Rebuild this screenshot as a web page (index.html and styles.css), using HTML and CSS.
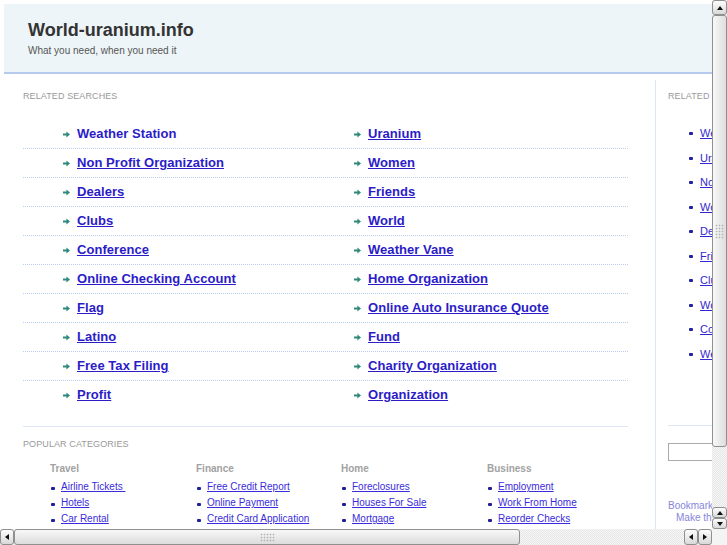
FILE: index.html
```html
<!DOCTYPE html>
<html lang="en">
<head>
<meta charset="utf-8">
<title>World-uranium.info</title>
<link rel="stylesheet" href="styles.css">
</head>
<body>
<div class="window">
  <div class="viewport">
    <div class="page">
      <header class="masthead">
        <h1 class="site-title">World-uranium.info</h1>
        <p class="tagline">What you need, when you need it</p>
      </header>
      <div class="columns">
        <main class="main">
          <h2 class="label">Related Searches</h2>
          <ul class="searches">
            <li class="search-row">
              <span class="search-cell"><svg class="arrow" viewBox="0 0 7 7"><path d="M0 2.4h3.4V0.4L7 3.5 3.4 6.6V4.6H0z"/></svg><a class="search-link plain" href="#">Weather Station</a></span>
              <span class="search-cell"><svg class="arrow" viewBox="0 0 7 7"><path d="M0 2.4h3.4V0.4L7 3.5 3.4 6.6V4.6H0z"/></svg><a class="search-link" href="#">Uranium</a></span>
            </li>
            <li class="search-row">
              <span class="search-cell"><svg class="arrow" viewBox="0 0 7 7"><path d="M0 2.4h3.4V0.4L7 3.5 3.4 6.6V4.6H0z"/></svg><a class="search-link" href="#">Non Profit Organization</a></span>
              <span class="search-cell"><svg class="arrow" viewBox="0 0 7 7"><path d="M0 2.4h3.4V0.4L7 3.5 3.4 6.6V4.6H0z"/></svg><a class="search-link" href="#">Women</a></span>
            </li>
            <li class="search-row">
              <span class="search-cell"><svg class="arrow" viewBox="0 0 7 7"><path d="M0 2.4h3.4V0.4L7 3.5 3.4 6.6V4.6H0z"/></svg><a class="search-link" href="#">Dealers</a></span>
              <span class="search-cell"><svg class="arrow" viewBox="0 0 7 7"><path d="M0 2.4h3.4V0.4L7 3.5 3.4 6.6V4.6H0z"/></svg><a class="search-link" href="#">Friends</a></span>
            </li>
            <li class="search-row">
              <span class="search-cell"><svg class="arrow" viewBox="0 0 7 7"><path d="M0 2.4h3.4V0.4L7 3.5 3.4 6.6V4.6H0z"/></svg><a class="search-link" href="#">Clubs</a></span>
              <span class="search-cell"><svg class="arrow" viewBox="0 0 7 7"><path d="M0 2.4h3.4V0.4L7 3.5 3.4 6.6V4.6H0z"/></svg><a class="search-link" href="#">World</a></span>
            </li>
            <li class="search-row">
              <span class="search-cell"><svg class="arrow" viewBox="0 0 7 7"><path d="M0 2.4h3.4V0.4L7 3.5 3.4 6.6V4.6H0z"/></svg><a class="search-link" href="#">Conference</a></span>
              <span class="search-cell"><svg class="arrow" viewBox="0 0 7 7"><path d="M0 2.4h3.4V0.4L7 3.5 3.4 6.6V4.6H0z"/></svg><a class="search-link" href="#">Weather Vane</a></span>
            </li>
            <li class="search-row">
              <span class="search-cell"><svg class="arrow" viewBox="0 0 7 7"><path d="M0 2.4h3.4V0.4L7 3.5 3.4 6.6V4.6H0z"/></svg><a class="search-link" href="#">Online Checking Account</a></span>
              <span class="search-cell"><svg class="arrow" viewBox="0 0 7 7"><path d="M0 2.4h3.4V0.4L7 3.5 3.4 6.6V4.6H0z"/></svg><a class="search-link" href="#">Home Organization</a></span>
            </li>
            <li class="search-row">
              <span class="search-cell"><svg class="arrow" viewBox="0 0 7 7"><path d="M0 2.4h3.4V0.4L7 3.5 3.4 6.6V4.6H0z"/></svg><a class="search-link" href="#">Flag</a></span>
              <span class="search-cell"><svg class="arrow" viewBox="0 0 7 7"><path d="M0 2.4h3.4V0.4L7 3.5 3.4 6.6V4.6H0z"/></svg><a class="search-link" href="#">Online Auto Insurance Quote</a></span>
            </li>
            <li class="search-row">
              <span class="search-cell"><svg class="arrow" viewBox="0 0 7 7"><path d="M0 2.4h3.4V0.4L7 3.5 3.4 6.6V4.6H0z"/></svg><a class="search-link" href="#">Latino</a></span>
              <span class="search-cell"><svg class="arrow" viewBox="0 0 7 7"><path d="M0 2.4h3.4V0.4L7 3.5 3.4 6.6V4.6H0z"/></svg><a class="search-link" href="#">Fund</a></span>
            </li>
            <li class="search-row">
              <span class="search-cell"><svg class="arrow" viewBox="0 0 7 7"><path d="M0 2.4h3.4V0.4L7 3.5 3.4 6.6V4.6H0z"/></svg><a class="search-link" href="#">Free Tax Filing</a></span>
              <span class="search-cell"><svg class="arrow" viewBox="0 0 7 7"><path d="M0 2.4h3.4V0.4L7 3.5 3.4 6.6V4.6H0z"/></svg><a class="search-link" href="#">Charity Organization</a></span>
            </li>
            <li class="search-row">
              <span class="search-cell"><svg class="arrow" viewBox="0 0 7 7"><path d="M0 2.4h3.4V0.4L7 3.5 3.4 6.6V4.6H0z"/></svg><a class="search-link" href="#">Profit</a></span>
              <span class="search-cell"><svg class="arrow" viewBox="0 0 7 7"><path d="M0 2.4h3.4V0.4L7 3.5 3.4 6.6V4.6H0z"/></svg><a class="search-link" href="#">Organization</a></span>
            </li>
          </ul>
          <section class="popular">
            <h2 class="label">Popular Categories</h2>
            <div class="categories">
              <div class="category">
                <h3 class="cat-title">Travel</h3>
                <ul class="cat-list">
                  <li><a href="#">Airline Tickets </a></li>
                  <li><a href="#">Hotels</a></li>
                  <li><a href="#">Car Rental</a></li>
                </ul>
              </div>
              <div class="category">
                <h3 class="cat-title">Finance</h3>
                <ul class="cat-list">
                  <li><a href="#">Free Credit Report</a></li>
                  <li><a href="#">Online Payment</a></li>
                  <li><a href="#">Credit Card Application</a></li>
                </ul>
              </div>
              <div class="category">
                <h3 class="cat-title">Home</h3>
                <ul class="cat-list">
                  <li><a href="#">Foreclosures</a></li>
                  <li><a href="#">Houses For Sale</a></li>
                  <li><a href="#">Mortgage</a></li>
                </ul>
              </div>
              <div class="category">
                <h3 class="cat-title">Business</h3>
                <ul class="cat-list">
                  <li><a href="#">Employment</a></li>
                  <li><a href="#">Work From Home</a></li>
                  <li><a href="#">Reorder Checks</a></li>
                </ul>
              </div>
            </div>
          </section>
        </main>
        <aside class="sidebar">
          <h2 class="label">Related Searches</h2>
          <ul class="side-list">
            <li><a href="#">Weather Station</a></li>
            <li><a href="#">Uranium</a></li>
            <li><a href="#">Non Profit Organization</a></li>
            <li><a href="#">Women</a></li>
            <li><a href="#">Dealers</a></li>
            <li><a href="#">Friends</a></li>
            <li><a href="#">Clubs</a></li>
            <li><a href="#">World</a></li>
            <li><a href="#">Conference</a></li>
            <li><a href="#">Weather Vane</a></li>
          </ul>
          <div class="side-search">
            <input class="search-input" type="text" aria-label="Search">
          </div>
          <p class="side-note">Bookmark this page</p>
          <p class="side-note indent">Make this your homepage</p>
        </aside>
      </div>
    </div>
  </div>
  <div class="vscroll">
    <div class="sb-btn"><span class="tri up"></span></div>
    <div class="sb-thumb v"><span class="grip v"></span></div>
    <div class="sb-track"></div>
    <div class="sb-btn small"><span class="tri up"></span></div>
    <div class="sb-btn small"><span class="tri down"></span></div>
  </div>
  <div class="hscroll">
    <div class="sb-btn"><span class="tri left"></span></div>
    <div class="sb-thumb h"><span class="grip h"></span></div>
    <div class="sb-track"></div>
    <div class="sb-btn"><span class="tri left"></span></div>
    <div class="sb-btn"><span class="tri right"></span></div>
  </div>
  <div class="corner"></div>
</div>
</body>
</html>
```

FILE: styles.css
```css
html, body {
  margin: 0;
  padding: 0;
  overflow: hidden;
  background: #fff;
}

.window {
  display: grid;
  grid-template-columns: 712px 15px;
  grid-template-rows: 529px 16px;
  width: 727px;
  height: 545px;
  font-family: "Liberation Sans", Arial, sans-serif;
}

.viewport {
  overflow: hidden;
  background: #fff;
}

.page {
  width: 940px;
  padding: 4px 0 0 4px;
}

/* header */
.masthead {
  height: 70px;
  box-sizing: border-box;
  padding: 15px 0 0 24px;
  background: #eef5f8;
  border-bottom: 2px solid #b6caee;
}

.site-title {
  margin: 0;
  font-size: 18px;
  line-height: 22px;
  font-weight: bold;
  color: #333;
}

.tagline {
  margin: 4px 0 0;
  font-size: 10px;
  line-height: 12px;
  color: #555;
}

/* columns */
.columns {
  display: flex;
  align-items: stretch;
  min-height: 560px;
}

.main {
  width: 651px;
  box-sizing: border-box;
  padding: 17px 27px 0 19px;
}

.label {
  margin: 0;
  font-size: 9px;
  line-height: 10px;
  font-weight: normal;
  letter-spacing: 0.1px;
  text-transform: uppercase;
  color: #999;
  white-space: nowrap;
}

.searches {
  list-style: none;
  margin: 19px 0 0;
  padding: 0;
}

.search-row {
  display: flex;
  height: 29px;
  box-sizing: border-box;
  padding: 0 0 1px 40px;
  background: repeating-linear-gradient(90deg, #b9cef0 0 1px, transparent 1px 2px) left bottom / 100% 1px no-repeat;
}

.search-row:last-child {
  background: none;
}

.search-cell {
  display: flex;
  align-items: center;
  gap: 7px;
  width: 291px;
  flex: none;
}

.arrow {
  width: 7px;
  height: 7px;
  fill: #2f8a7c;
  flex: none;
  margin-top: 1px;
}

.search-link {
  font-size: 13px;
  line-height: 28px;
  font-weight: bold;
  color: #2b1cc8;
  text-decoration: underline;
  white-space: nowrap;
  letter-spacing: 0.05px;
}

.search-link.plain {
  text-decoration: none;
}

.popular {
  margin-top: 16px;
  border-top: 1px solid #dde7f5;
  padding-top: 12px;
}

.categories {
  display: grid;
  grid-template-columns: 146px 145px 146px 146px;
  padding-left: 27px;
  margin-top: 14px;
}

.cat-title {
  margin: 0 0 4px;
  font-size: 10px;
  line-height: 12px;
  font-weight: bold;
  color: #a2a2a2;
}

.cat-list {
  list-style: none;
  margin: 0;
  padding: 0;
}

.cat-list li {
  display: flex;
  align-items: center;
  gap: 6px;
  height: 16px;
  padding-left: 1px;
}

.cat-list li::before {
  content: "";
  width: 4px;
  height: 3px;
  border-radius: 1px;
  background: #20209a;
  flex: none;
  margin-top: 2px;
}

.cat-list a {
  font-size: 10px;
  line-height: 16px;
  color: #3a2cdc;
  text-decoration: underline;
  white-space: pre;
}

/* sidebar */
.sidebar {
  width: 285px;
  box-sizing: border-box;
  margin-top: 6px;
  padding: 11px 0 0 12px;
  border-left: 1px solid #dde6f4;
}

.side-list {
  list-style: none;
  margin: 20px 0 0;
  padding: 0 0 0 21px;
}

.side-list li {
  display: flex;
  align-items: center;
  gap: 7px;
  height: 24.5px;
}

.side-list li::before {
  content: "";
  width: 4px;
  height: 3px;
  border-radius: 1px;
  background: #2020a0;
  flex: none;
  margin-top: 1px;
}

.side-list a {
  font-size: 11px;
  line-height: 14px;
  color: #3228d0;
  text-decoration: underline;
  white-space: nowrap;
}

.side-search {
  margin-top: 59px;
  border-top: 1px solid #dde7f5;
  padding-top: 17px;
}

.search-input {
  display: block;
  width: 150px;
  height: 18px;
  box-sizing: border-box;
  margin: 0;
  border: 1px solid #ababab;
  background: #fff;
  padding: 0;
}

.side-note {
  margin: 0;
  font-size: 10px;
  line-height: 12px;
  color: #8686dc;
  white-space: nowrap;
}

.side-search + .side-note {
  margin-top: 39px;
}

.side-note.indent {
  padding-left: 8px;
}

/* scrollbars */
.vscroll {
  display: flex;
  flex-direction: column;
  background: repeating-conic-gradient(#e6e6e6 0 25%, #f7f7f7 0 50%) 0 0 / 2px 2px;
}

.hscroll {
  display: flex;
  background: repeating-conic-gradient(#e6e6e6 0 25%, #f7f7f7 0 50%) 0 0 / 2px 2px;
}

.corner {
  background: #f4f4f4;
}

.sb-track {
  flex: 1;
}

.sb-btn {
  box-sizing: border-box;
  display: flex;
  align-items: center;
  justify-content: center;
  border: 1px solid #8f8f8f;
  border-radius: 3px;
  background: linear-gradient(#fdfdfd, #d9d9d9);
  flex: none;
}

.vscroll .sb-btn {
  width: 15px;
  height: 15px;
}

.vscroll .sb-btn.small {
  height: 11px;
}

.hscroll .sb-btn {
  width: 14px;
  height: 16px;
}

.sb-thumb {
  box-sizing: border-box;
  display: flex;
  align-items: center;
  justify-content: center;
  border: 1px solid #909090;
  border-radius: 3px;
  flex: none;
}

.sb-thumb.v {
  width: 15px;
  height: 432px;
  background: linear-gradient(90deg, #f8f8f8, #dedede);
}

.sb-thumb.h {
  width: 506px;
  height: 16px;
  background: linear-gradient(#f8f8f8, #dcdcdc);
}

.grip {
  display: block;
  background: radial-gradient(circle, #b0b0b0 0.7px, transparent 1.1px) 0 0 / 3px 3px;
}

.grip.v {
  width: 9px;
  height: 15px;
}

.grip.h {
  width: 15px;
  height: 9px;
}

.tri {
  width: 0;
  height: 0;
  border: 3px solid transparent;
}

.tri.up {
  border-bottom: 4px solid #111;
  border-top-width: 0;
  border-left-width: 3.5px;
  border-right-width: 3.5px;
}

.tri.down {
  border-top: 4px solid #111;
  border-bottom-width: 0;
  border-left-width: 3.5px;
  border-right-width: 3.5px;
}

.tri.left {
  border-right: 4px solid #111;
  border-left-width: 0;
  border-top-width: 3.5px;
  border-bottom-width: 3.5px;
}

.tri.right {
  border-left: 4px solid #111;
  border-right-width: 0;
  border-top-width: 3.5px;
  border-bottom-width: 3.5px;
}
```
